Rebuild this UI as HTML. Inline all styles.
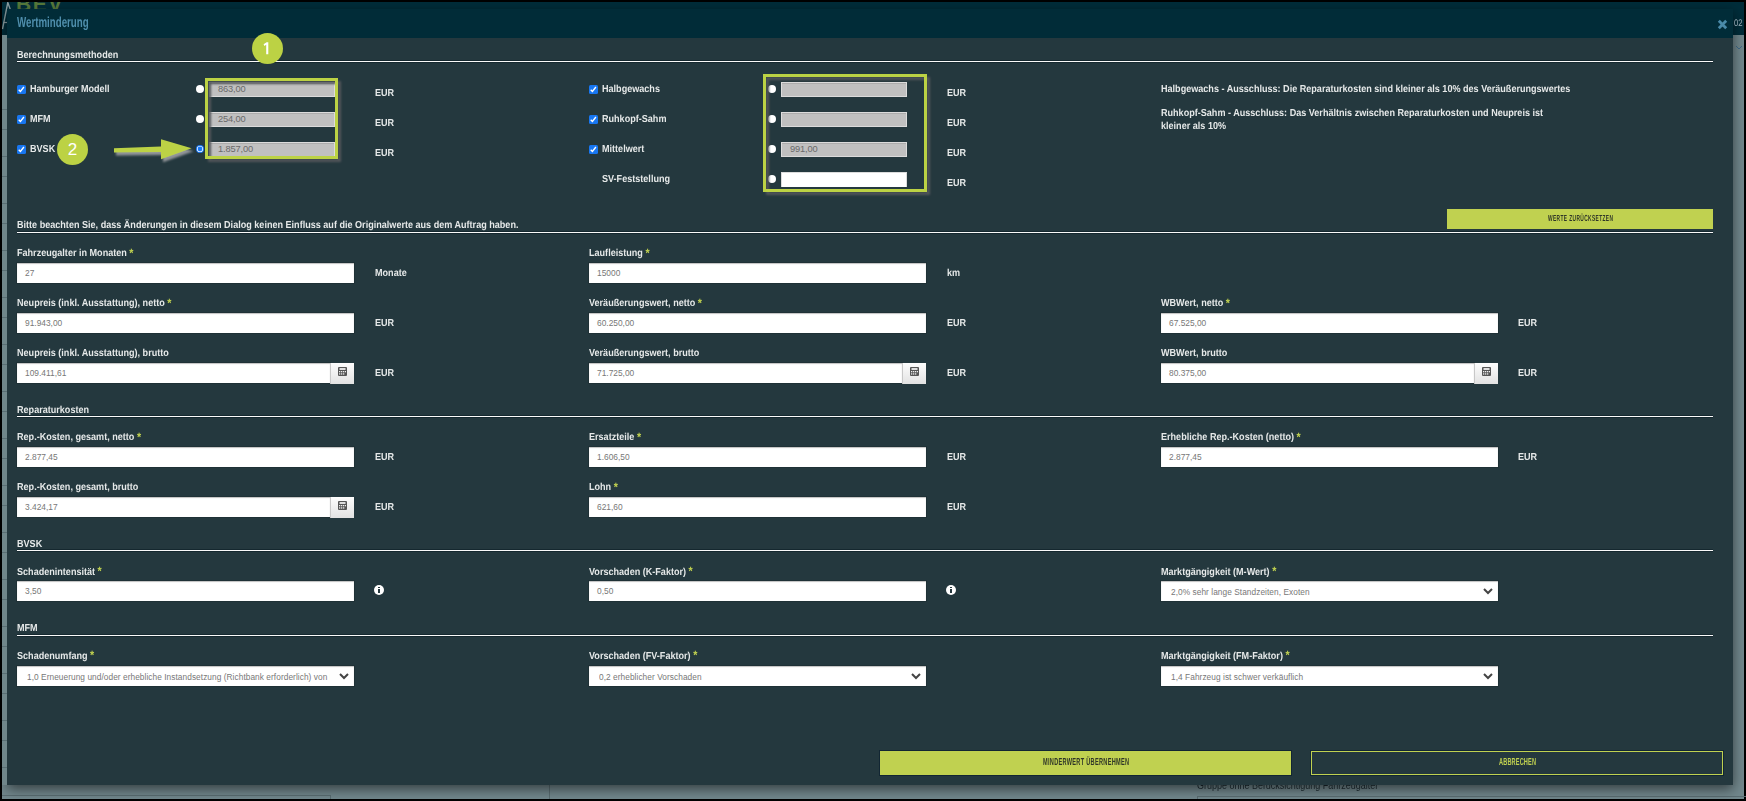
<!DOCTYPE html><html><head><meta charset="utf-8"><style>
html,body{margin:0;padding:0;}
body{width:1746px;height:801px;background:#000;position:relative;overflow:hidden;font-family:"Liberation Sans", sans-serif;}
.t{position:absolute;white-space:nowrap;line-height:normal;}
.btx{line-height:1;font-weight:bold;transform:scaleX(0.55);transform-origin:0 0;text-rendering:geometricPrecision;}
.lb{line-height:1;font-weight:bold;color:#e6e9e9;transform:scaleX(0.89);transform-origin:0 0;text-rendering:geometricPrecision;}
.hl{position:absolute;left:17px;width:1696px;height:1px;background:#fafafa;box-shadow:0 -1px 0 rgba(10,28,34,0.55), 0 1px 0 rgba(10,28,34,0.55);}
.inp{position:absolute;height:20px;background:#fff;box-shadow:inset 0 1px 1px rgba(0,0,0,0.25), 0 0 0 1px rgba(0,0,0,0.12);}
.inp span{position:absolute;left:8px;top:5px;font-size:8.4px;color:#777;white-space:nowrap;line-height:normal;}
.calc{position:absolute;width:23px;height:21px;background:linear-gradient(#fdfdfd,#e2e2e2);border-left:1px solid #c8c8c8;}
.calc svg{position:absolute;left:7px;top:4px;}
.chev{position:absolute;}
.cb{position:absolute;width:9px;height:9px;background:#1877f2;border-radius:1.5px;}
.cb svg{position:absolute;left:0;top:0;}
.rd{position:absolute;width:8px;height:8px;border-radius:50%;background:#fff;}
.ginp{position:absolute;width:126px;height:15px;background:#c0c0c0;box-shadow:inset 0 1px 0 #acacac;border:1px solid #dcdcdc;box-sizing:border-box;}
.ginp span{position:absolute;left:8px;top:0.8px;font-size:9.3px;color:#6a6a6a;letter-spacing:-0.15px;line-height:normal;}
.hbox{position:absolute;border:3px solid #bcd244;filter:drop-shadow(3px 3px 1px rgba(82,86,90,1));}
.circ{position:absolute;width:31px;height:31px;border-radius:50%;background:#bcd244;color:#fff;font-size:17px;text-align:center;line-height:31px;}
</style></head><body>

<div style="position:absolute;left:2px;top:2px;width:1742px;height:797px;background:#72888d"></div>
<div style="position:absolute;left:2px;top:2px;width:1742px;height:33px;background:#012d3a;overflow:hidden"><div class="t" style="left:14px;top:-10px;font-size:21px;font-weight:bold;color:#587b3c;letter-spacing:1.5px">BEV</div></div>
<svg style="position:absolute;left:2px;top:2px" width="10" height="34" viewBox="0 0 10 34"><path d="M0.5 27 L5.8 0.5 L8.5 8" stroke="#8a9da1" stroke-width="1.4" fill="none"/><path d="M1.5 20.5 L6 20.5" stroke="#8a9da1" stroke-width="1.2"/></svg>
<svg style="position:absolute;left:1735px;top:45px" width="8" height="6" viewBox="0 0 8 6"><path d="M1 1 L4 4 L7 1" stroke="#3f6a8a" stroke-width="1" fill="none"/></svg>
<div style="position:absolute;left:2px;top:795px;width:329px;height:1px;background:#5a6d72"></div>
<div style="position:absolute;left:330px;top:795px;width:1px;height:4px;background:#5a6d72"></div>
<div style="position:absolute;left:549px;top:785px;width:1px;height:14px;background:#5a6d72"></div>
<div style="position:absolute;left:1197px;top:796px;width:1182px;height:1px;background:#5a6d72"></div>
<div class="t" style="left:1197px;top:779.5px;font-size:10.5px;color:#1c2a30;line-height:1;transform:scaleX(0.855);transform-origin:0 0">Gruppe ohne Berücksichtigung Fahrzeugalter</div>
<div style="position:absolute;left:1197px;top:796px;width:1px;height:3px;background:#5a6d72"></div>
<div style="position:absolute;left:7px;top:9px;width:1726px;height:776px;background:#24383e;box-shadow:0 4px 12px rgba(0,0,0,0.55)"></div>
<div style="position:absolute;left:7px;top:9px;width:1726px;height:29px;background:#012c38"></div>
<div style="position:absolute;left:2px;top:35px;width:5px;height:750px;background:#70868a"></div>
<div style="position:absolute;left:2px;top:109px;width:5px;height:1px;background:#5a6e73"></div>
<div style="position:absolute;left:2px;top:129px;width:5px;height:1px;background:#5a6e73"></div>
<div style="position:absolute;left:2px;top:156px;width:5px;height:1px;background:#5a6e73"></div>
<div style="position:absolute;left:2px;top:176px;width:5px;height:1px;background:#5a6e73"></div>
<div style="position:absolute;left:2px;top:203px;width:5px;height:1px;background:#5a6e73"></div>
<div style="position:absolute;left:2px;top:223px;width:5px;height:1px;background:#5a6e73"></div>
<div style="position:absolute;left:2px;top:250px;width:5px;height:1px;background:#5a6e73"></div>
<div style="position:absolute;left:2px;top:270px;width:5px;height:1px;background:#5a6e73"></div>
<div style="position:absolute;left:2px;top:297px;width:5px;height:1px;background:#5a6e73"></div>
<div style="position:absolute;left:2px;top:317px;width:5px;height:1px;background:#5a6e73"></div>
<div style="position:absolute;left:2px;top:344px;width:5px;height:1px;background:#5a6e73"></div>
<div style="position:absolute;left:2px;top:364px;width:5px;height:1px;background:#5a6e73"></div>
<div style="position:absolute;left:2px;top:391px;width:5px;height:1px;background:#5a6e73"></div>
<div style="position:absolute;left:2px;top:411px;width:5px;height:1px;background:#5a6e73"></div>
<div style="position:absolute;left:2px;top:438px;width:5px;height:1px;background:#5a6e73"></div>
<div style="position:absolute;left:2px;top:458px;width:5px;height:1px;background:#5a6e73"></div>
<div style="position:absolute;left:2px;top:485px;width:5px;height:1px;background:#5a6e73"></div>
<div style="position:absolute;left:2px;top:505px;width:5px;height:1px;background:#5a6e73"></div>
<div style="position:absolute;left:2px;top:532px;width:5px;height:1px;background:#5a6e73"></div>
<div style="position:absolute;left:2px;top:552px;width:5px;height:1px;background:#5a6e73"></div>
<div style="position:absolute;left:2px;top:579px;width:5px;height:1px;background:#5a6e73"></div>
<div style="position:absolute;left:2px;top:599px;width:5px;height:1px;background:#5a6e73"></div>
<div style="position:absolute;left:2px;top:626px;width:5px;height:1px;background:#5a6e73"></div>
<div style="position:absolute;left:2px;top:646px;width:5px;height:1px;background:#5a6e73"></div>
<div style="position:absolute;left:2px;top:673px;width:5px;height:1px;background:#5a6e73"></div>
<div style="position:absolute;left:2px;top:693px;width:5px;height:1px;background:#5a6e73"></div>
<div style="position:absolute;left:2px;top:720px;width:5px;height:1px;background:#5a6e73"></div>
<div style="position:absolute;left:2px;top:740px;width:5px;height:1px;background:#5a6e73"></div>
<div style="position:absolute;left:2px;top:767px;width:5px;height:1px;background:#5a6e73"></div>
<div class="t" style="left:17px;top:14.5px;font-size:14.6px;font-weight:bold;color:#4f8eac;text-rendering:geometricPrecision;transform:scaleX(0.666);transform-origin:0 0;">Wertminderung</div>
<svg style="position:absolute;left:1716.5px;top:18.5px" width="11" height="11" viewBox="0 0 11 11"><path d="M1.8 1.8 L9.2 9.2 M9.2 1.8 L1.8 9.2" stroke="#4a8aa8" stroke-width="2.8"/></svg>
<div class="t" style="left:1733.5px;top:19px;font-size:9.5px;color:#9aacb6;line-height:1;text-rendering:geometricPrecision;transform:scaleX(0.8);transform-origin:0 0">02</div>
<div class="t lb" style="left:17px;top:50.87px;font-size:10.2px;">Berechnungsmethoden</div>
<div class="hl" style="top:61px"></div>
<div class="cb" style="left:17px;top:85px"><svg width="9" height="9" viewBox="0 0 9 9"><path d="M1.7 4.7 L3.4 6.5 L6.9 2.0" stroke="#fff" stroke-width="1.35" fill="none"/></svg></div>
<div class="t lb" style="left:30px;top:84.87px;font-size:10.2px;">Hamburger Modell</div>
<div class="ginp" style="left:209px;top:82px"><span>863,00</span></div>
<div class="rd" style="left:196px;top:85px"></div>
<div class="t lb" style="left:374.5px;top:88.87px;font-size:10.2px;">EUR</div>
<div class="cb" style="left:17px;top:115px"><svg width="9" height="9" viewBox="0 0 9 9"><path d="M1.7 4.7 L3.4 6.5 L6.9 2.0" stroke="#fff" stroke-width="1.35" fill="none"/></svg></div>
<div class="t lb" style="left:30px;top:114.87px;font-size:10.2px;">MFM</div>
<div class="ginp" style="left:209px;top:112px"><span>254,00</span></div>
<div class="rd" style="left:196px;top:115px"></div>
<div class="t lb" style="left:374.5px;top:118.87px;font-size:10.2px;">EUR</div>
<div class="cb" style="left:17px;top:145px"><svg width="9" height="9" viewBox="0 0 9 9"><path d="M1.7 4.7 L3.4 6.5 L6.9 2.0" stroke="#fff" stroke-width="1.35" fill="none"/></svg></div>
<div class="t lb" style="left:30px;top:144.87px;font-size:10.2px;">BVSK</div>
<div class="ginp" style="left:209px;top:142px"><span>1.857,00</span></div>
<div class="t lb" style="left:374.5px;top:148.87px;font-size:10.2px;">EUR</div>
<svg style="position:absolute;left:196px;top:145px" width="8" height="8" viewBox="0 0 8 8"><circle cx="4" cy="4" r="4" fill="#1a7af8"/><circle cx="4" cy="4" r="3.1" fill="#fff"/><circle cx="4" cy="4" r="2.4" fill="#1a7af8"/></svg>
<div class="hbox" style="left:205px;top:78px;width:127px;height:75px"></div>
<div class="cb" style="left:589px;top:85px"><svg width="9" height="9" viewBox="0 0 9 9"><path d="M1.7 4.7 L3.4 6.5 L6.9 2.0" stroke="#fff" stroke-width="1.35" fill="none"/></svg></div>
<div class="t lb" style="left:602px;top:84.87px;font-size:10.2px;">Halbgewachs</div>
<div class="ginp" style="left:781px;top:82px"><span></span></div>
<div class="rd" style="left:768px;top:85px"></div>
<div class="t lb" style="left:946.5px;top:88.87px;font-size:10.2px;">EUR</div>
<div class="cb" style="left:589px;top:115px"><svg width="9" height="9" viewBox="0 0 9 9"><path d="M1.7 4.7 L3.4 6.5 L6.9 2.0" stroke="#fff" stroke-width="1.35" fill="none"/></svg></div>
<div class="t lb" style="left:602px;top:114.87px;font-size:10.2px;">Ruhkopf-Sahm</div>
<div class="ginp" style="left:781px;top:112px"><span></span></div>
<div class="rd" style="left:768px;top:115px"></div>
<div class="t lb" style="left:946.5px;top:118.87px;font-size:10.2px;">EUR</div>
<div class="cb" style="left:589px;top:145px"><svg width="9" height="9" viewBox="0 0 9 9"><path d="M1.7 4.7 L3.4 6.5 L6.9 2.0" stroke="#fff" stroke-width="1.35" fill="none"/></svg></div>
<div class="t lb" style="left:602px;top:144.87px;font-size:10.2px;">Mittelwert</div>
<div class="ginp" style="left:781px;top:142px"><span>991,00</span></div>
<div class="rd" style="left:768px;top:145px"></div>
<div class="t lb" style="left:946.5px;top:148.87px;font-size:10.2px;">EUR</div>
<div class="t lb" style="left:602px;top:174.87px;font-size:10.2px;">SV-Feststellung</div>
<div class="ginp" style="left:781px;top:172px;background:#fff;box-shadow:none;border-bottom:0"></div>
<div class="rd" style="left:768px;top:175px"></div>
<div class="t lb" style="left:946.5px;top:178.87px;font-size:10.2px;">EUR</div>
<div class="hbox" style="left:763px;top:74px;width:158px;height:112px"></div>
<div class="t lb" style="left:1161px;top:84.87px;font-size:10.2px;">Halbgewachs - Ausschluss: Die Reparaturkosten sind kleiner als 10% des Veräußerungswertes</div>
<div class="t lb" style="left:1161px;top:109.37px;font-size:10.2px;">Ruhkopf-Sahm - Ausschluss: Das Verhältnis zwischen Reparaturkosten und Neupreis ist</div>
<div class="t lb" style="left:1161px;top:122.37px;font-size:10.2px;">kleiner als 10%</div>
<div class="circ" style="left:252px;top:33px"><svg style="position:absolute;left:0;top:0" width="31" height="31" viewBox="0 0 31 31"><path d="M11.6 11.2 L14.6 9.2 L16.3 9.2 L16.3 21.2 L14.2 21.2 L14.2 11.8 L12.4 13 Z" fill="#fff"/></svg></div>
<div class="circ" style="left:57px;top:134px">2</div>
<svg style="position:absolute;left:110px;top:135px" width="90" height="32" viewBox="0 0 90 32">
<defs><filter id="sh" x="-20%" y="-50%" width="140%" height="200%"><feGaussianBlur in="SourceAlpha" stdDeviation="1.1"/><feOffset dx="2" dy="3.2"/><feColorMatrix type="matrix" values="0 0 0 0 0.31  0 0 0 0 0.32  0 0 0 0 0.34  0 0 0 0.95 0"/><feMerge><feMergeNode/><feMergeNode in="SourceGraphic"/></feMerge></filter></defs>
<polygon filter="url(#sh)" fill="#bcd244" points="4,13.3 51,11.6 51,4.2 81.6,13.3 51,24.3 51,17 4,17.5"/>
</svg>
<div style="position:absolute;left:1447px;top:209px;width:266px;height:20px;background:#c0d150"></div>
<div class="t btx" style="left:1547.7px;top:214px;font-size:8.8px;color:#2f3628;letter-spacing:0.71px">WERTE ZURÜCKSETZEN</div>
<div class="t lb" style="left:17px;top:220.87px;font-size:10.2px;">Bitte beachten Sie, dass Änderungen in diesem Dialog keinen Einfluss auf die Originalwerte aus dem Auftrag haben.</div>
<div class="hl" style="top:232px"></div>
<div class="t lb" style="left:17px;top:249.37px;font-size:10.2px;">Fahrzeugalter in Monaten <span style="color:#c0d150;font-size:12px;line-height:0;position:relative;top:0.5px">*</span></div>
<div class="inp" style="left:17px;top:263.0px;width:337px"><span>27</span></div>
<div class="t lb" style="left:374.5px;top:269.37px;font-size:10.2px;">Monate</div>
<div class="t lb" style="left:589px;top:249.37px;font-size:10.2px;">Laufleistung <span style="color:#c0d150;font-size:12px;line-height:0;position:relative;top:0.5px">*</span></div>
<div class="inp" style="left:589px;top:263.0px;width:337px"><span>15000</span></div>
<div class="t lb" style="left:946.5px;top:269.37px;font-size:10.2px;">km</div>
<div class="t lb" style="left:17px;top:299.37px;font-size:10.2px;">Neupreis (inkl. Ausstattung), netto <span style="color:#c0d150;font-size:12px;line-height:0;position:relative;top:0.5px">*</span></div>
<div class="inp" style="left:17px;top:313.0px;width:337px"><span>91.943,00</span></div>
<div class="t lb" style="left:374.5px;top:319.37px;font-size:10.2px;">EUR</div>
<div class="t lb" style="left:589px;top:299.37px;font-size:10.2px;">Veräußerungswert, netto <span style="color:#c0d150;font-size:12px;line-height:0;position:relative;top:0.5px">*</span></div>
<div class="inp" style="left:589px;top:313.0px;width:337px"><span>60.250,00</span></div>
<div class="t lb" style="left:946.5px;top:319.37px;font-size:10.2px;">EUR</div>
<div class="t lb" style="left:1161px;top:299.37px;font-size:10.2px;">WBWert, netto <span style="color:#c0d150;font-size:12px;line-height:0;position:relative;top:0.5px">*</span></div>
<div class="inp" style="left:1161px;top:313.0px;width:337px"><span>67.525,00</span></div>
<div class="t lb" style="left:1518px;top:319.37px;font-size:10.2px;">EUR</div>
<div class="t lb" style="left:17px;top:349.37px;font-size:10.2px;">Neupreis (inkl. Ausstattung), brutto</div>
<div class="inp" style="left:17px;top:363.0px;width:313px"><span>109.411,61</span></div>
<div class="calc" style="left:330px;top:363.0px"><svg width="9" height="9" viewBox="0 0 9 9"><rect x="0" y="0" width="9" height="9" rx="1" fill="#555"/><rect x="1.5" y="1.2" width="6" height="1.6" fill="#fff"/><rect x="1" y="4" width="1.3" height="1.3" fill="#eee"/><rect x="3" y="4" width="1.3" height="1.3" fill="#eee"/><rect x="5" y="4" width="1.3" height="1.3" fill="#eee"/><rect x="7" y="4" width="1" height="1.3" fill="#eee"/><rect x="1" y="6.3" width="1.3" height="1.3" fill="#eee"/><rect x="3" y="6.3" width="1.3" height="1.3" fill="#eee"/><rect x="5" y="6.3" width="1.3" height="1.3" fill="#eee"/></svg></div>
<div class="t lb" style="left:374.5px;top:369.37px;font-size:10.2px;">EUR</div>
<div class="t lb" style="left:589px;top:349.37px;font-size:10.2px;">Veräußerungswert, brutto</div>
<div class="inp" style="left:589px;top:363.0px;width:313px"><span>71.725,00</span></div>
<div class="calc" style="left:902px;top:363.0px"><svg width="9" height="9" viewBox="0 0 9 9"><rect x="0" y="0" width="9" height="9" rx="1" fill="#555"/><rect x="1.5" y="1.2" width="6" height="1.6" fill="#fff"/><rect x="1" y="4" width="1.3" height="1.3" fill="#eee"/><rect x="3" y="4" width="1.3" height="1.3" fill="#eee"/><rect x="5" y="4" width="1.3" height="1.3" fill="#eee"/><rect x="7" y="4" width="1" height="1.3" fill="#eee"/><rect x="1" y="6.3" width="1.3" height="1.3" fill="#eee"/><rect x="3" y="6.3" width="1.3" height="1.3" fill="#eee"/><rect x="5" y="6.3" width="1.3" height="1.3" fill="#eee"/></svg></div>
<div class="t lb" style="left:946.5px;top:369.37px;font-size:10.2px;">EUR</div>
<div class="t lb" style="left:1161px;top:349.37px;font-size:10.2px;">WBWert, brutto</div>
<div class="inp" style="left:1161px;top:363.0px;width:313px"><span>80.375,00</span></div>
<div class="calc" style="left:1474px;top:363.0px"><svg width="9" height="9" viewBox="0 0 9 9"><rect x="0" y="0" width="9" height="9" rx="1" fill="#555"/><rect x="1.5" y="1.2" width="6" height="1.6" fill="#fff"/><rect x="1" y="4" width="1.3" height="1.3" fill="#eee"/><rect x="3" y="4" width="1.3" height="1.3" fill="#eee"/><rect x="5" y="4" width="1.3" height="1.3" fill="#eee"/><rect x="7" y="4" width="1" height="1.3" fill="#eee"/><rect x="1" y="6.3" width="1.3" height="1.3" fill="#eee"/><rect x="3" y="6.3" width="1.3" height="1.3" fill="#eee"/><rect x="5" y="6.3" width="1.3" height="1.3" fill="#eee"/></svg></div>
<div class="t lb" style="left:1518px;top:369.37px;font-size:10.2px;">EUR</div>
<div class="t lb" style="left:17px;top:405.87px;font-size:10.2px;">Reparaturkosten</div>
<div class="hl" style="top:416px"></div>
<div class="t lb" style="left:17px;top:433.37px;font-size:10.2px;">Rep.-Kosten, gesamt, netto <span style="color:#c0d150;font-size:12px;line-height:0;position:relative;top:0.5px">*</span></div>
<div class="inp" style="left:17px;top:447.0px;width:337px"><span>2.877,45</span></div>
<div class="t lb" style="left:374.5px;top:453.37px;font-size:10.2px;">EUR</div>
<div class="t lb" style="left:589px;top:433.37px;font-size:10.2px;">Ersatzteile <span style="color:#c0d150;font-size:12px;line-height:0;position:relative;top:0.5px">*</span></div>
<div class="inp" style="left:589px;top:447.0px;width:337px"><span>1.606,50</span></div>
<div class="t lb" style="left:946.5px;top:453.37px;font-size:10.2px;">EUR</div>
<div class="t lb" style="left:1161px;top:433.37px;font-size:10.2px;">Erhebliche Rep.-Kosten (netto) <span style="color:#c0d150;font-size:12px;line-height:0;position:relative;top:0.5px">*</span></div>
<div class="inp" style="left:1161px;top:447.0px;width:337px"><span>2.877,45</span></div>
<div class="t lb" style="left:1518px;top:453.37px;font-size:10.2px;">EUR</div>
<div class="t lb" style="left:17px;top:483.37px;font-size:10.2px;">Rep.-Kosten, gesamt, brutto</div>
<div class="inp" style="left:17px;top:497.0px;width:313px"><span>3.424,17</span></div>
<div class="calc" style="left:330px;top:497.0px"><svg width="9" height="9" viewBox="0 0 9 9"><rect x="0" y="0" width="9" height="9" rx="1" fill="#555"/><rect x="1.5" y="1.2" width="6" height="1.6" fill="#fff"/><rect x="1" y="4" width="1.3" height="1.3" fill="#eee"/><rect x="3" y="4" width="1.3" height="1.3" fill="#eee"/><rect x="5" y="4" width="1.3" height="1.3" fill="#eee"/><rect x="7" y="4" width="1" height="1.3" fill="#eee"/><rect x="1" y="6.3" width="1.3" height="1.3" fill="#eee"/><rect x="3" y="6.3" width="1.3" height="1.3" fill="#eee"/><rect x="5" y="6.3" width="1.3" height="1.3" fill="#eee"/></svg></div>
<div class="t lb" style="left:374.5px;top:503.37px;font-size:10.2px;">EUR</div>
<div class="t lb" style="left:589px;top:483.37px;font-size:10.2px;">Lohn <span style="color:#c0d150;font-size:12px;line-height:0;position:relative;top:0.5px">*</span></div>
<div class="inp" style="left:589px;top:497.0px;width:337px"><span>621,60</span></div>
<div class="t lb" style="left:946.5px;top:503.37px;font-size:10.2px;">EUR</div>
<div class="t lb" style="left:17px;top:539.87px;font-size:10.2px;">BVSK</div>
<div class="hl" style="top:550px"></div>
<div class="t lb" style="left:17px;top:567.87px;font-size:10.2px;">Schadenintensität <span style="color:#c0d150;font-size:12px;line-height:0;position:relative;top:0.5px">*</span></div>
<div class="inp" style="left:17px;top:581px;width:337px"><span>3,50</span></div>
<div class="t lb" style="left:589px;top:567.87px;font-size:10.2px;">Vorschaden (K-Faktor) <span style="color:#c0d150;font-size:12px;line-height:0;position:relative;top:0.5px">*</span></div>
<div class="inp" style="left:589px;top:581px;width:337px"><span>0,50</span></div>
<div class="t lb" style="left:1161px;top:567.87px;font-size:10.2px;">Marktgängigkeit (M-Wert) <span style="color:#c0d150;font-size:12px;line-height:0;position:relative;top:0.5px">*</span></div>
<div class="inp" style="left:1161px;top:581px;width:337px"><span style="left:10px;top:6px;font-size:8.3px;color:#777;width:303px;overflow:hidden;letter-spacing:0.06px">2,0% sehr lange Standzeiten, Exoten</span></div>
<svg class="chev" style="left:1483px;top:588px" width="10" height="7" viewBox="0 0 10 7"><path d="M1 1 L5 5 L9 1" stroke="#444" stroke-width="2" fill="none"/></svg>
<div style="position:absolute;left:374px;top:585px;width:10px;height:10px;border-radius:50%;background:#fff"><div style="position:absolute;left:4.2px;top:2px;width:1.6px;height:1.4px;background:#25383e"></div><div style="position:absolute;left:4.2px;top:4.2px;width:1.6px;height:3.6px;background:#25383e"></div></div>
<div style="position:absolute;left:946px;top:585px;width:10px;height:10px;border-radius:50%;background:#fff"><div style="position:absolute;left:4.2px;top:2px;width:1.6px;height:1.4px;background:#25383e"></div><div style="position:absolute;left:4.2px;top:4.2px;width:1.6px;height:3.6px;background:#25383e"></div></div>
<div class="t lb" style="left:17px;top:623.87px;font-size:10.2px;">MFM</div>
<div class="hl" style="top:635px"></div>
<div class="t lb" style="left:17px;top:651.87px;font-size:10.2px;">Schadenumfang <span style="color:#c0d150;font-size:12px;line-height:0;position:relative;top:0.5px">*</span></div>
<div class="inp" style="left:17px;top:665.5px;width:337px"><span style="left:10px;top:6px;font-size:8.3px;color:#777;width:303px;overflow:hidden;letter-spacing:0.06px">1,0 Erneuerung und/oder erhebliche Instandsetzung (Richtbank erforderlich) von Rahmen</span></div>
<svg class="chev" style="left:339px;top:672.5px" width="10" height="7" viewBox="0 0 10 7"><path d="M1 1 L5 5 L9 1" stroke="#444" stroke-width="2" fill="none"/></svg>
<div class="t lb" style="left:589px;top:651.87px;font-size:10.2px;">Vorschaden (FV-Faktor) <span style="color:#c0d150;font-size:12px;line-height:0;position:relative;top:0.5px">*</span></div>
<div class="inp" style="left:589px;top:665.5px;width:337px"><span style="left:10px;top:6px;font-size:8.3px;color:#777;width:303px;overflow:hidden;letter-spacing:0.06px">0,2 erheblicher Vorschaden</span></div>
<svg class="chev" style="left:911px;top:672.5px" width="10" height="7" viewBox="0 0 10 7"><path d="M1 1 L5 5 L9 1" stroke="#444" stroke-width="2" fill="none"/></svg>
<div class="t lb" style="left:1161px;top:651.87px;font-size:10.2px;">Marktgängigkeit (FM-Faktor) <span style="color:#c0d150;font-size:12px;line-height:0;position:relative;top:0.5px">*</span></div>
<div class="inp" style="left:1161px;top:665.5px;width:337px"><span style="left:10px;top:6px;font-size:8.3px;color:#777;width:303px;overflow:hidden;letter-spacing:0.06px">1,4 Fahrzeug ist schwer verkäuflich</span></div>
<svg class="chev" style="left:1483px;top:672.5px" width="10" height="7" viewBox="0 0 10 7"><path d="M1 1 L5 5 L9 1" stroke="#444" stroke-width="2" fill="none"/></svg>
<div style="position:absolute;left:880px;top:751px;width:411px;height:24px;background:#c0d150;box-shadow:0 0 0 1px rgba(0,20,40,0.5)"></div>
<div class="t btx" style="left:1042.5px;top:757.6px;font-size:10.2px;color:#2f3628;letter-spacing:0.53px">MINDERWERT ÜBERNEHMEN</div>
<div style="position:absolute;left:1311px;top:751px;width:410px;height:22px;border:1px solid #c0d150;box-shadow:0 0 0 1px rgba(0,20,40,0.5)"></div>
<div class="t btx" style="left:1498.5px;top:757.6px;font-size:10.2px;color:#c0d150;letter-spacing:0.27px">ABBRECHEN</div>
</body></html>
